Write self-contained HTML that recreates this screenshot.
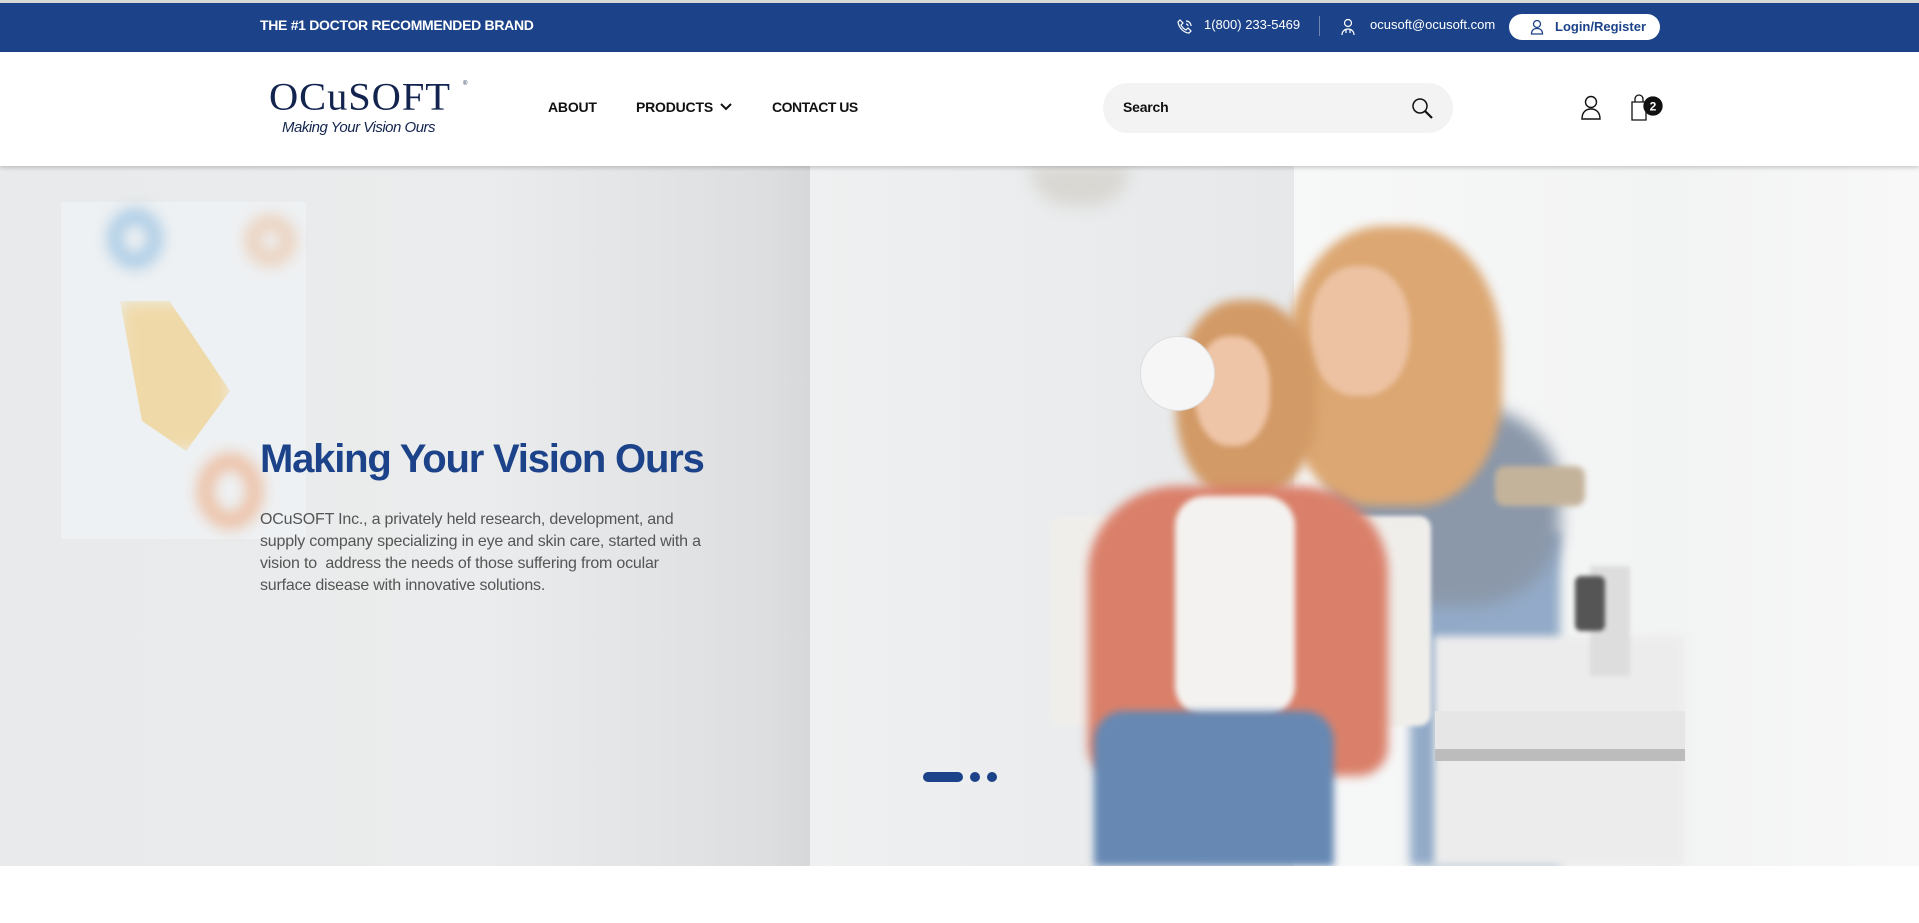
<!DOCTYPE html>
<html><head><meta charset="utf-8"><style>
*{margin:0;padding:0;box-sizing:border-box}
body{width:1919px;height:923px;overflow:hidden;background:#fff;font-family:"Liberation Sans",sans-serif;position:relative}
.a{position:absolute}
.top{left:0;top:3px;width:1919px;height:49px;background:#1c4389;color:#fff}
.bar0{left:0;top:0;width:1919px;height:3px;background:#d8d8d8}
.nav{left:0;top:52px;width:1919px;height:114px;background:#fff;box-shadow:0 2px 4px rgba(0,0,0,.18);z-index:5}
.navt{font-size:14px;font-weight:bold;color:#111;letter-spacing:-.2px}
.hero{left:0;top:166px;width:1919px;height:700px;overflow:hidden;background:#f4f5f6}
.blur{filter:blur(8px)}
</style></head><body>
<div class="a bar0"></div>
<div class="a top">
  <div class="a" style="left:260px;top:14px;font-size:14px;font-weight:bold;letter-spacing:-.3px">THE #1 DOCTOR RECOMMENDED BRAND</div>
  <svg class="a" style="left:1176px;top:15px" width="18" height="18" viewBox="0 0 18 18" fill="none" stroke="#fff" stroke-width="1.2"><path d="M4 2l3 3-2 2c1 2 3 4 5 5l2-2 3 3-2 2C8 15 3 10 2 4z"/><path d="M10 3a5 5 0 0 1 5 5M10 6a2 2 0 0 1 2 2"/></svg>
  <div class="a" style="left:1204px;top:14px;font-size:13px">1(800) 233-5469</div>
  <div class="a" style="left:1319px;top:13px;width:1px;height:20px;background:#6f87b5"></div>
  <svg class="a" style="left:1340px;top:15px" width="16" height="18" viewBox="0 0 16 18" fill="none" stroke="#fff" stroke-width="1.2"><circle cx="8" cy="5" r="3.5"/><path d="M2 17c0-4 3-6 6-6s6 2 6 6M6 12v3M10 12v3"/></svg>
  <div class="a" style="left:1370px;top:14px;font-size:13px">ocusoft@ocusoft.com</div>
  <div class="a" style="left:1509px;top:11px;width:151px;height:26px;background:#fff;border-radius:13px;color:#1c4389;font-size:13px;font-weight:bold">
    <svg class="a" style="left:21px;top:5px" width="14" height="16" viewBox="0 0 14 16" fill="none" stroke="#1c4389" stroke-width="1.3"><circle cx="7" cy="5" r="3.5"/><path d="M1.5 15c0-4 2.5-5.5 5.5-5.5s5.5 1.5 5.5 5.5z"/></svg>
    <span class="a" style="left:46px;top:5px">Login/Register</span>
  </div>
</div>
<div class="a nav">
  <div class="a" style="left:269px;top:26px;font-family:'Liberation Serif',serif;font-size:44px;color:#13244f;letter-spacing:1px;transform:scaleX(.92) scaleY(.88);transform-origin:left top;line-height:1">OCuSOFT</div>
  <div class="a" style="left:463px;top:29px;font-size:6px;color:#13244f">®</div>
  <div class="a" style="left:282px;top:67px;font-size:15px;font-style:italic;color:#13244f;letter-spacing:-.5px">Making Your Vision Ours</div>
  <div class="a navt" style="left:548px;top:47px">ABOUT</div>
  <div class="a navt" style="left:636px;top:47px">PRODUCTS</div>
  <svg class="a" style="left:720px;top:51px" width="12" height="8" viewBox="0 0 12 8" fill="none" stroke="#111" stroke-width="2"><path d="M1 1l5 5 5-5"/></svg>
  <div class="a navt" style="left:772px;top:47px;letter-spacing:-.5px">CONTACT US</div>
  <div class="a" style="left:1103px;top:31px;width:350px;height:50px;background:#f3f3f3;border-radius:25px">
    <span class="a navt" style="left:20px;top:16px">Search</span>
    <svg class="a" style="left:308px;top:14px" width="24" height="24" viewBox="0 0 24 24" fill="none" stroke="#111" stroke-width="1.5"><circle cx="9" cy="9" r="7"/><path d="M14 14l7 7" stroke-width="2.2"/></svg>
  </div>
  <svg class="a" style="left:1580px;top:43px" width="22" height="26" viewBox="0 0 22 26" fill="none" stroke="#111" stroke-width="1.4"><circle cx="11" cy="7" r="5.5"/><path d="M2 24c0-7 4-10 9-10s9 3 9 10z"/></svg>
  <svg class="a" style="left:1630px;top:42px" width="34" height="28" viewBox="0 0 34 28" fill="none" stroke="#111" stroke-width="1.3"><path d="M2 8h14v18H2z"/><path d="M5 8V5a4 4 0 0 1 8 0v3"/><circle cx="23" cy="12" r="9" fill="#111"/><text x="23" y="16.5" font-size="12" font-weight="bold" fill="#fff" stroke="none" text-anchor="middle" font-family="Liberation Sans">2</text></svg>
</div>
<div class="a hero">
  <div class="a" style="left:0;top:0;width:810px;height:700px;background:linear-gradient(90deg,#e8eaeb 0%,#eaeced 60%,#dcdee0 95%,#d6d8da 100%)"></div>
  <div class="a" style="left:810px;top:0;width:484px;height:700px;background:linear-gradient(90deg,#eef0f1,#e6e8ea)"></div>
  <div class="a" style="left:1294px;top:0;width:625px;height:700px;background:linear-gradient(90deg,#f7f8f8,#f2f3f3 60%,#f8f8f8)"></div>
  <div class="a" style="left:61px;top:36px;width:245px;height:337px;background:#eef1f3"></div>
  <div class="a blur" style="left:110px;top:45px;width:50px;height:55px;border:9px solid #7fb3dc;border-radius:50%"></div>
  <div class="a blur" style="left:248px;top:52px;width:45px;height:45px;border:8px solid #eab68e;border-radius:50%"></div>
  <div class="a blur" style="left:120px;top:135px;width:110px;height:150px;background:#efd9a8;clip-path:polygon(0 0,45% 0,100% 60%,60% 100%,20% 80%)"></div>
  <div class="a blur" style="left:200px;top:290px;width:60px;height:70px;border:10px solid #eca275;border-radius:50%"></div>
  <div class="a blur" style="left:1030px;top:0;width:100px;height:40px;background:#d9d7d2;border-radius:0 0 50px 50px"></div>
  <!-- people -->
  <div class="a" style="left:1410px;top:366px;width:150px;height:334px;background:#93abc8;filter:blur(5px)"></div>
  <div class="a" style="left:1330px;top:240px;width:230px;height:200px;background:#8b98aa;border-radius:40%;filter:blur(8px)"></div>
  <div class="a" style="left:1287px;top:60px;width:215px;height:280px;background:#dca772;border-radius:45% 45% 40% 40%;filter:blur(5px)"></div>
  <div class="a" style="left:1310px;top:100px;width:100px;height:130px;background:#ecc2a3;border-radius:45%;filter:blur(3px)"></div>
  <div class="a" style="left:1050px;top:350px;width:381px;height:210px;background:#f0eeeb;border-radius:12px;filter:blur(2px)"></div>
  <div class="a" style="left:1176px;top:134px;width:140px;height:200px;background:#d29a66;border-radius:45%;filter:blur(5px)"></div>
  <div class="a" style="left:1195px;top:170px;width:75px;height:110px;background:#efc5a8;border-radius:45%;filter:blur(3px)"></div>
  <div class="a" style="left:1140px;top:170px;width:75px;height:75px;background:#f6f6f6;border-radius:50%;border:1px solid #ddd"></div>
  <div class="a" style="left:1088px;top:320px;width:300px;height:290px;background:#da806a;border-radius:30% 30% 10% 10%;filter:blur(5px)"></div>
  <div class="a" style="left:1175px;top:330px;width:120px;height:220px;background:#f4f2f0;border-radius:30px;filter:blur(3px)"></div>
  <div class="a" style="left:1094px;top:545px;width:240px;height:155px;background:#6688b3;border-radius:30px 30px 0 0;filter:blur(4px)"></div>
  <div class="a" style="left:1434px;top:470px;width:250px;height:230px;background:#ececec;filter:blur(4px)"></div>
  <div class="a" style="left:1435px;top:545px;width:250px;height:50px;background:#e6e6e6;border-bottom:12px solid #bcbcbc"></div>
  <div class="a" style="left:1590px;top:400px;width:40px;height:110px;background:#ddd;filter:blur(2px)"></div>
  <div class="a" style="left:1495px;top:300px;width:90px;height:40px;background:#c4b39b;border-radius:10px;filter:blur(3px)"></div>
  <div class="a" style="left:1575px;top:410px;width:30px;height:55px;background:#555;border-radius:6px;filter:blur(2px)"></div>
  <!-- text -->
  <div class="a" style="left:260px;top:271px;font-size:40px;font-weight:bold;color:#1c4389;letter-spacing:-1.2px">Making Your Vision Ours</div>
  <div class="a" style="left:260px;top:343px;font-size:16px;line-height:22px;color:#555;letter-spacing:-.2px">OCuSOFT Inc., a privately held research, development, and<br>supply company specializing in eye and skin care, started with a<br>vision to&nbsp; address the needs of those suffering from ocular<br>surface disease with innovative solutions.</div>
  <div class="a" style="left:923px;top:606px;width:40px;height:10px;background:#1c4389;border-radius:5px"></div>
  <div class="a" style="left:970px;top:606px;width:10px;height:10px;background:#1c4389;border-radius:50%"></div>
  <div class="a" style="left:987px;top:606px;width:10px;height:10px;background:#1c4389;border-radius:50%"></div>
</div>
</body></html>
